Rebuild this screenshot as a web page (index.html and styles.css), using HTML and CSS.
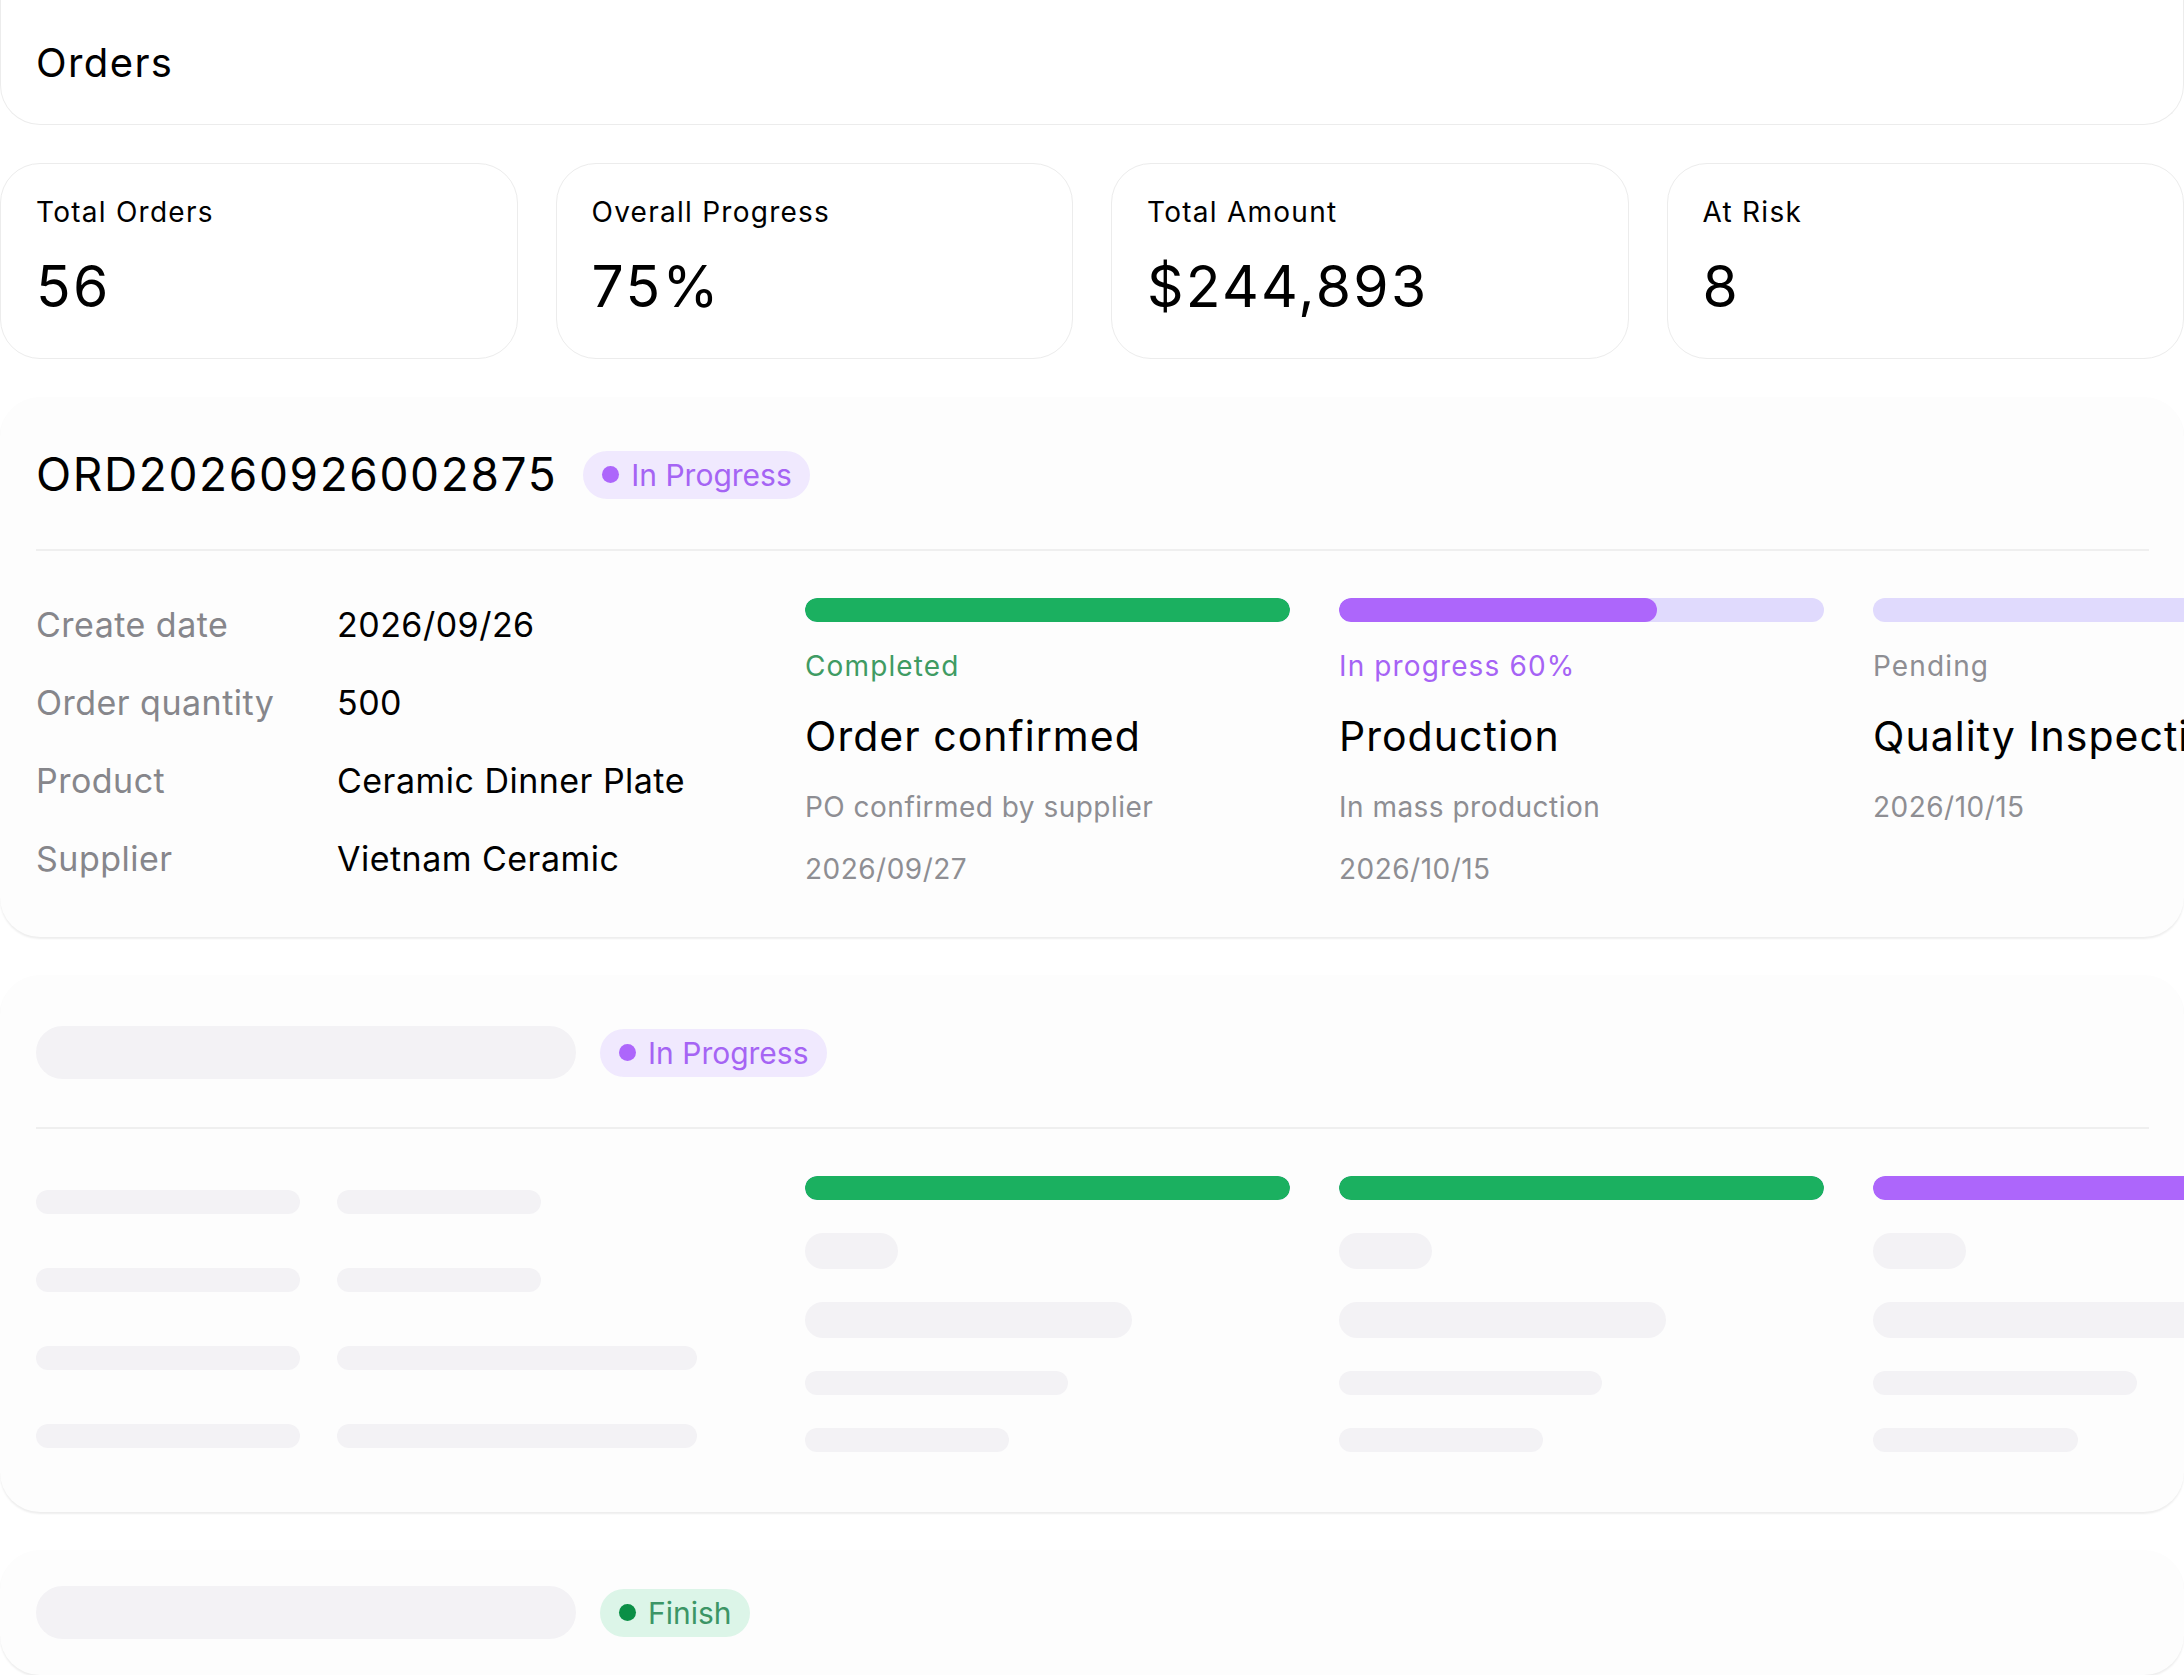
FILE: index.html
```html
<!DOCTYPE html>
<html>
<head>
    <title>Orders</title>
    <link rel="stylesheet" href="styles.css">
</head>
<body>
    <div class="page">
        <div class="page-header">Orders</div>

        <div class="stats">
            <div class="stat-card">
                <div class="stat-label">Total Orders</div>
                <div class="stat-value">56</div>
            </div>
            <div class="stat-card">
                <div class="stat-label">Overall Progress</div>
                <div class="stat-value">75%</div>
            </div>
            <div class="stat-card">
                <div class="stat-label">Total Amount</div>
                <div class="stat-value">$244,893</div>
            </div>
            <div class="stat-card">
                <div class="stat-label">At Risk</div>
                <div class="stat-value">8</div>
            </div>
        </div>

        <!-- loaded order -->
        <div class="order-card">
            <div class="order-head">
                <div class="order-id">ORD20260926002875</div>
                <span class="badge badge-progress"><span class="badge-dot"></span>In Progress</span>
            </div>
            <div class="order-divider"></div>
            <div class="order-body">
                <div class="details">
                    <div class="detail-label">Create date</div>
                    <div class="detail-value">2026/09/26</div>
                    <div class="detail-label">Order quantity</div>
                    <div class="detail-value">500</div>
                    <div class="detail-label">Product</div>
                    <div class="detail-value">Ceramic Dinner Plate</div>
                    <div class="detail-label">Supplier</div>
                    <div class="detail-value">Vietnam Ceramic</div>
                </div>
                <div class="steps">
                    <div class="step">
                        <div class="step-bar"><div class="step-fill fill-green" style="width: 100%"></div></div>
                        <div class="step-status status-done">Completed</div>
                        <div class="step-title">Order confirmed</div>
                        <div class="step-desc">PO confirmed by supplier</div>
                        <div class="step-date">2026/09/27</div>
                    </div>
                    <div class="step">
                        <div class="step-bar"><div class="step-fill fill-purple" style="width: 65.5%"></div></div>
                        <div class="step-status status-progress">In progress 60%</div>
                        <div class="step-title">Production</div>
                        <div class="step-desc">In mass production</div>
                        <div class="step-date">2026/10/15</div>
                    </div>
                    <div class="step">
                        <div class="step-bar"><div class="step-fill" style="width: 0%"></div></div>
                        <div class="step-status status-pending">Pending</div>
                        <div class="step-title">Quality Inspection</div>
                        <div class="step-desc">2026/10/15</div>
                    </div>
                </div>
            </div>
        </div>

        <!-- loading order -->
        <div class="order-card loading">
            <div class="order-head">
                <div class="sk sk-id"></div>
                <span class="badge badge-progress"><span class="badge-dot"></span>In Progress</span>
            </div>
            <div class="order-divider"></div>
            <div class="order-body">
                <div class="details sk-details">
                    <div class="sk sk-line" style="width: 264px"></div>
                    <div class="sk sk-line" style="width: 204px"></div>
                    <div class="sk sk-line" style="width: 264px"></div>
                    <div class="sk sk-line" style="width: 204px"></div>
                    <div class="sk sk-line" style="width: 264px"></div>
                    <div class="sk sk-line" style="width: 360px"></div>
                    <div class="sk sk-line" style="width: 264px"></div>
                    <div class="sk sk-line" style="width: 360px"></div>
                </div>
                <div class="steps">
                    <div class="step">
                        <div class="step-bar"><div class="step-fill fill-green" style="width: 100%"></div></div>
                        <div class="sk sk-status"></div>
                        <div class="sk sk-title" style="width: 327px"></div>
                        <div class="sk sk-small" style="width: 263px"></div>
                        <div class="sk sk-small" style="width: 204px"></div>
                    </div>
                    <div class="step">
                        <div class="step-bar"><div class="step-fill fill-green" style="width: 100%"></div></div>
                        <div class="sk sk-status"></div>
                        <div class="sk sk-title" style="width: 327px"></div>
                        <div class="sk sk-small" style="width: 263px"></div>
                        <div class="sk sk-small" style="width: 204px"></div>
                    </div>
                    <div class="step">
                        <div class="step-bar"><div class="step-fill fill-purple" style="width: 100%"></div></div>
                        <div class="sk sk-status"></div>
                        <div class="sk sk-title" style="width: 380px"></div>
                        <div class="sk sk-small" style="width: 264px"></div>
                        <div class="sk sk-small" style="width: 205px"></div>
                    </div>
                </div>
            </div>
        </div>

        <!-- collapsed order -->
        <div class="order-card collapsed">
            <div class="order-head">
                <div class="sk sk-id"></div>
                <span class="badge badge-finish"><span class="badge-dot"></span>Finish</span>
            </div>
        </div>
    </div>
</body>
</html>
```

FILE: styles.css
```css
body {
    font-family: Inter, "Noto Sans", sans-serif;
    letter-spacing: 0.03em;
    background-color: #fff;
    color: #000;
    margin: 0;
    padding: 0;
    overflow: hidden;
}

.page {
    display: flex;
    flex-direction: column;
    gap: 38px;
    width: 2184px;
}

.page-header {
    display: flex;
    align-items: center;
    height: 125px;
    box-sizing: border-box;
    padding-left: 35px;
    font-size: 40px;
    letter-spacing: 0.035em;
    border: 1px solid #ececec;
    border-top: none;
    border-radius: 0 0 40px 40px;
    background-color: #fff;
}

.stats {
    display: grid;
    grid-template-columns: repeat(4, 1fr);
    gap: 38px;
}

.stat-card {
    height: 196px;
    box-sizing: border-box;
    padding: 31px 35px 0;
    border: 1px solid #ececec;
    border-radius: 40px;
    background-color: #fff;
}

.stat-label {
    font-size: 28px;
    line-height: 34px;
    letter-spacing: 0.045em;
}

.stat-value {
    font-size: 57px;
    line-height: 68px;
    letter-spacing: 0.04em;
    margin-top: 24px;
}

.order-card {
    padding: 51px 35px 50px 36px;
    border-radius: 40px;
    background-color: #fdfdfd;
    box-shadow: 0 2px 2px rgba(0, 0, 0, 0.07);
    overflow: hidden;
}

.order-card.collapsed {
    padding-top: 36px;
    padding-bottom: 36px;
}

.order-head {
    display: flex;
    align-items: center;
    gap: 26px;
    height: 53px;
}

.order-id {
    font-size: 46px;
    line-height: 53px;
    letter-spacing: 0.035em;
}

.badge {
    display: inline-flex;
    align-items: center;
    gap: 12px;
    height: 48px;
    padding: 0 18px 0 19px;
    border-radius: 24px;
    font-size: 30px;
    letter-spacing: 0;
}

.badge-dot {
    width: 17px;
    height: 17px;
    border-radius: 50%;
}

.badge-progress {
    background-color: #f0e9fe;
    color: #a564f4;
}

.badge-progress .badge-dot {
    background-color: #ad66fb;
}

.badge-finish {
    background-color: #dcf5e8;
    color: #3c9566;
}

.badge-finish .badge-dot {
    background-color: #0b8f46;
}

.order-divider {
    height: 2px;
    margin-top: 48px;
    background-color: #efefef;
}

.order-body {
    display: flex;
    margin-top: 47px;
}

.details {
    flex: 0 0 769px;
    display: grid;
    grid-template-columns: 301px auto;
    grid-auto-rows: 52px;
    row-gap: 26px;
    align-content: start;
    align-items: center;
    font-size: 34px;
}

.detail-label {
    color: #86868b;
}

.steps {
    display: grid;
    grid-template-columns: repeat(3, 485px);
    column-gap: 49px;
    align-items: start;
}

.step {
    display: flex;
    flex-direction: column;
    white-space: nowrap;
}

.step-bar {
    height: 24px;
    border-radius: 12px;
    background-color: #e0dafd;
    overflow: hidden;
}

.step-fill {
    height: 100%;
    border-radius: 12px;
}

.fill-green {
    background-color: #1bb060;
}

.fill-purple {
    background-color: #ad66fb;
}

.step-status {
    font-size: 28px;
    line-height: 36px;
    letter-spacing: 0.04em;
    margin-top: 26px;
}

.status-done {
    color: #3f9b63;
}

.status-progress {
    color: #a663f5;
}

.status-pending {
    color: #8e8e93;
}

.step-title {
    font-size: 41px;
    line-height: 48px;
    letter-spacing: 0.025em;
    margin-top: 28px;
}

.step-desc, .step-date {
    font-size: 28px;
    line-height: 36px;
    color: #8e8e93;
}

.step-desc {
    margin-top: 29px;
}

.step-date {
    margin-top: 26px;
}

/* skeleton placeholders */
.sk {
    background-color: #f3f2f5;
    border-radius: 30px;
}

.sk-id {
    width: 540px;
    height: 53px;
    margin-right: -2px;
}

.sk-line {
    height: 24px;
}

.sk-status {
    width: 93px;
    height: 36px;
    margin-top: 33px;
}

.sk-title {
    height: 36px;
    margin-top: 33px;
}

.sk-small {
    height: 24px;
    margin-top: 33px;
}
```
